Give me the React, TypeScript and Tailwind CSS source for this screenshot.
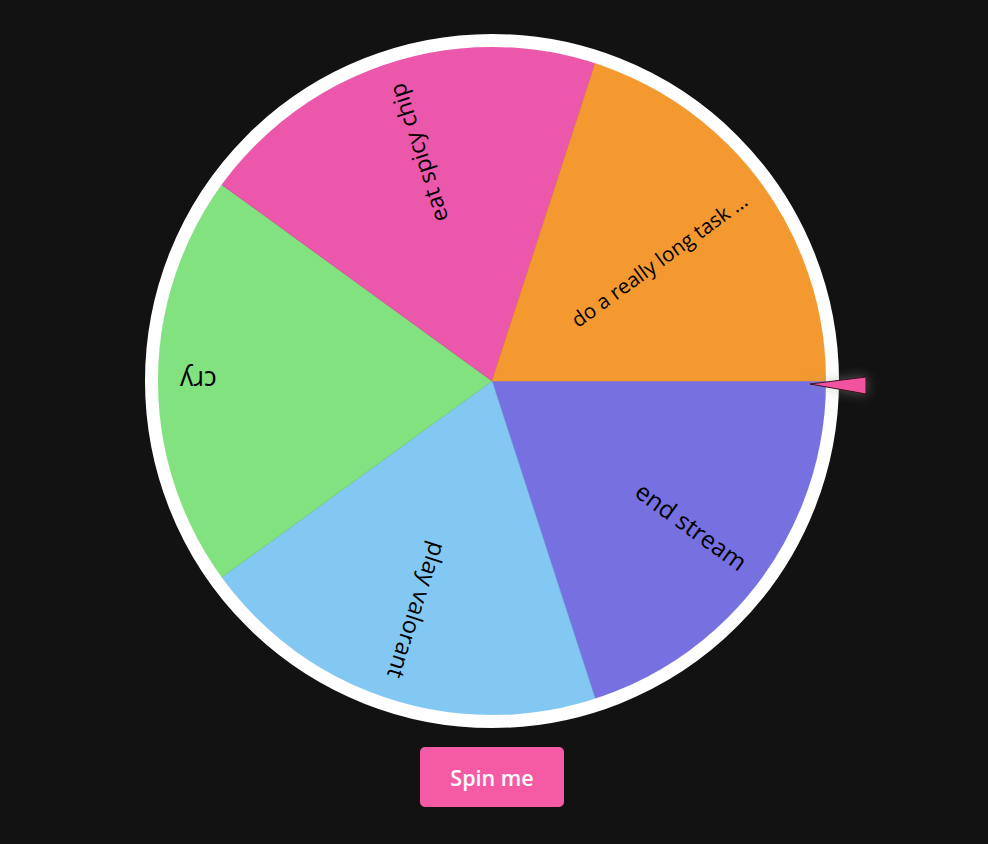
import React from "react";

const CX = 350;
const CY = 350;
const R = 334.5;

type Seg = { label: string; color: string; size: number };

const segs: Seg[] = [
  { label: "end stream", color: "#7670e0", size: 24.5 },
  { label: "play valorant", color: "#83c8f2", size: 23.5 },
  { label: "cry", color: "#82e27f", size: 26.5 },
  { label: "eat spicy chip", color: "#eb57ab", size: 23 },
  { label: "do a really long task ...", color: "#f3992f", size: 20.5 },
];

function pt(deg: number, r: number) {
  const a = (deg * Math.PI) / 180;
  return [CX + r * Math.cos(a), CY + r * Math.sin(a)];
}

function Wheel() {
  const step = 360 / segs.length;
  return (
    <svg width={700} height={700} viewBox="0 0 700 700" className="block">
      {segs.map((s, i) => {
        const a0 = i * step;
        const a1 = (i + 1) * step;
        const [x0, y0] = pt(a0, R);
        const [x1, y1] = pt(a1, R);
        return (
          <path
            key={"p" + i}
            d={`M ${CX} ${CY} L ${x0} ${y0} A ${R} ${R} 0 0 1 ${x1} ${y1} Z`}
            fill={s.color}
            stroke={s.color}
            strokeWidth={0.5}
          />
        );
      })}
      {segs.map((s, i) => {
        const mid = i * step + step / 2;
        return (
          <g key={"t" + i} transform={`rotate(${mid} ${CX} ${CY})`}>
            <text
              x={CX + 312}
              y={CY}
              textAnchor="end"
              dominantBaseline="central"
              fill="#000"
              fontSize={s.size}
              fontFamily="'Open Sans', 'Noto Sans', sans-serif"
            >
              {s.label}
            </text>
          </g>
        );
      })}
      <circle cx={CX} cy={CY} r={340.5} fill="none" stroke="#ffffff" strokeWidth={13} />
    </svg>
  );
}

export default function App() {
  return (
    <div className="min-h-[844px] w-full bg-[#121212] flex flex-col items-center pt-[31px] pr-[5px]">
      <div className="relative w-[700px] h-[700px]">
        <Wheel />
        <svg
          width={62}
          height={24}
          viewBox="0 0 62 24"
          className="absolute left-[666px] top-[343px] [filter:drop-shadow(0_0_6px_rgba(160,160,160,0.5))]"
        >
          <polygon
            points="2,10 58,3 58,20"
            fill="#f2539f"
            stroke="#3a1020"
            strokeWidth={1}
            strokeLinejoin="miter"
          />
        </svg>
      </div>
      <button className="mt-[16px] w-[144px] h-[60px] rounded-[5px] bg-[#f55aa5] text-white text-[21.5px] font-semibold font-['Open_Sans',sans-serif] ml-[1px] pt-[3px]">
        Spin me
      </button>
    </div>
  );
}
